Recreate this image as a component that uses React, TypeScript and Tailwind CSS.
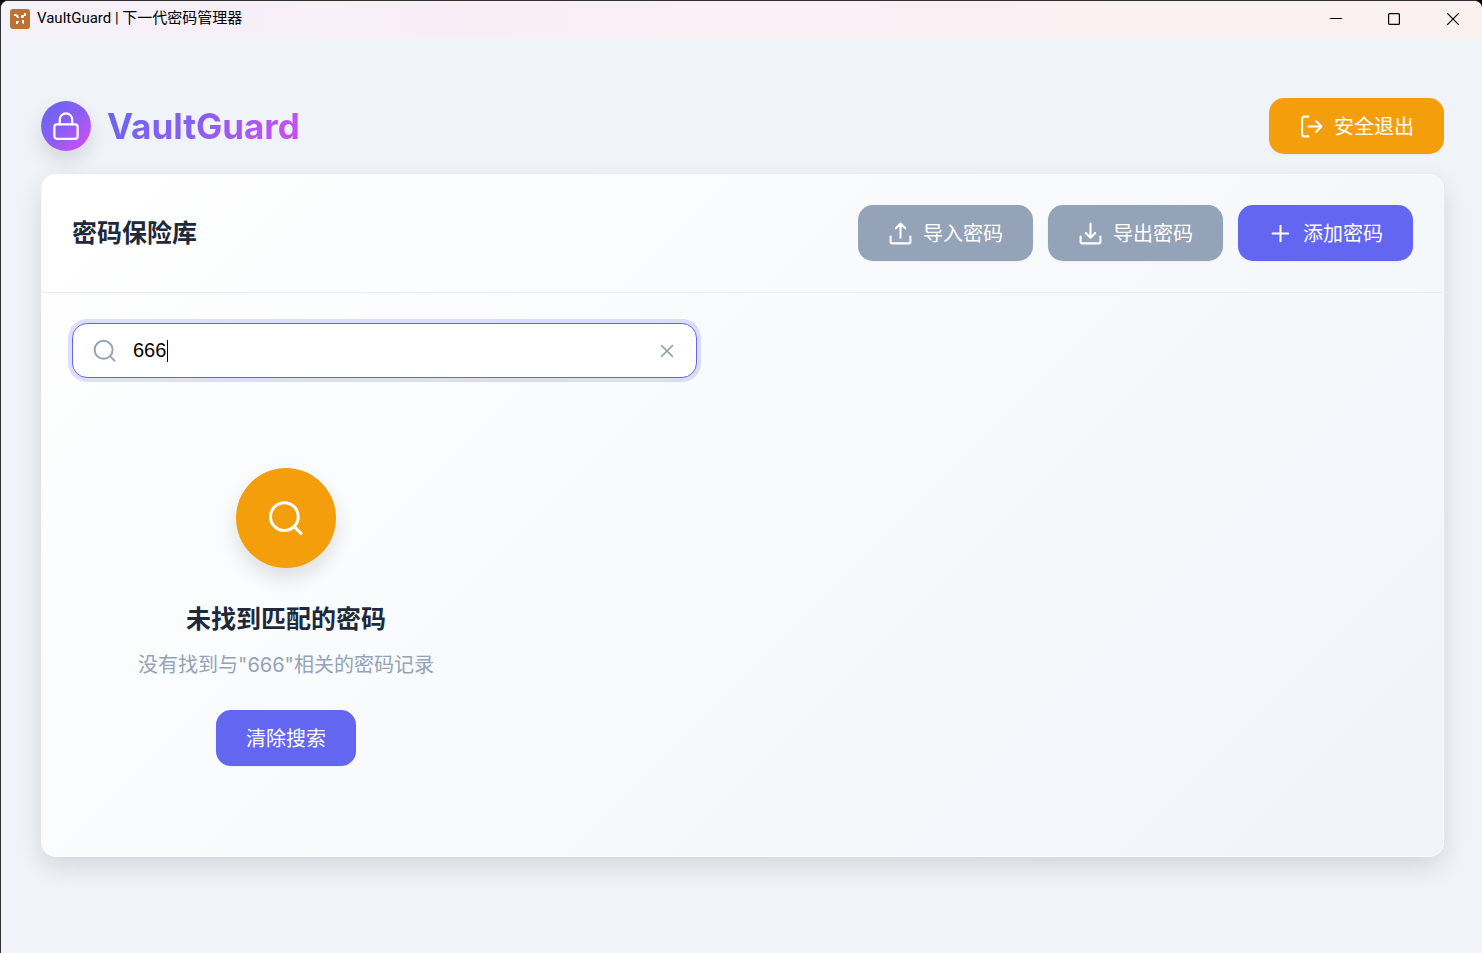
import { useState } from "react";
import type { ReactNode } from "react";

type IconProps = { children: ReactNode; className: string; width?: number };

function Icon({ children, className, width = 2 }: IconProps) {
  return (
    <svg viewBox="0 0 24 24" fill="none" stroke="currentColor" strokeWidth={width} strokeLinecap="round" strokeLinejoin="round" className={className} aria-hidden="true">
      {children}
    </svg>
  );
}

const searchShape = (
  <>
    <circle cx="10.6" cy="10.8" r="9" />
    <path d="m17.2 17.4 4.2 4.2" />
  </>
);

function ActionButton({ color, label, icon, onClick }: { color: string; label: string; icon?: ReactNode; onClick?: () => void }) {
  return (
    <button type="button" onClick={onClick} className={`flex h-14 items-center justify-center gap-2.5 rounded-[15px] px-[30px] text-xl font-normal text-white shadow-[0_1px_2px_rgba(0,0,0,0.05)] ${color}`}>
      {icon && <Icon className="size-[25px]">{icon}</Icon>}
      <span className="pt-0.5">{label}</span>
    </button>
  );
}

function TitleBar() {
  return (
    <header className="flex h-[37px] items-center justify-between bg-linear-to-r from-[#f5f1f9] via-[#f9eef7] via-30% to-[#faf1ef] pb-0.5">
      <div className="flex items-center gap-[7px] pl-[9px] font-[Roboto,'Noto_Sans_CJK_SC',sans-serif] text-[15px] text-black">
        <svg viewBox="0 0 20 20" className="size-5" aria-hidden="true">
          <rect width="20" height="20" rx="3" fill="#bb7333" />
          <path d="M4 5h2l1 1h1l1 3H7L6 7H4zM14 4h2v3h-2v1l-1 1h-2V7l1-1h2zM6 12h3l-1 2v1H6zM12 11h2v4h-1l-1-2z" fill="white" />
        </svg>
        <span>VaultGuard | 下一代密码管理器</span>
      </div>
      <div className="flex h-full text-black">
        <button type="button" aria-label="最小化" className="grid w-[58px] place-items-center">
          <svg viewBox="0 0 12 12" className="size-3"><path d="M0 5.5h12" stroke="currentColor" /></svg>
        </button>
        <button type="button" aria-label="最大化" className="grid w-[58px] place-items-center">
          <svg viewBox="0 0 12 12" className="size-3"><rect x=".6" y=".6" width="10.8" height="10.8" rx="1" fill="none" stroke="currentColor" strokeWidth="1.2" /></svg>
        </button>
        <button type="button" aria-label="关闭" className="grid w-[59px] place-items-center">
          <svg viewBox="0 0 12 12" className="size-3"><path d="m0 0 12 12M12 0 0 12" stroke="currentColor" strokeWidth="1.2" /></svg>
        </button>
      </div>
    </header>
  );
}

export default function App() {
  const [query, setQuery] = useState("666");
  return (
    <div className="min-h-screen bg-black font-[Inter,'Noto_Sans_CJK_SC',sans-serif]">
      <div className="flex min-h-screen flex-col overflow-hidden rounded-t-lg border-t border-l border-[#303030] bg-[#f0f4f9]">
        <TitleBar />
        <main className="pt-[60px] pr-[38px] pb-10 pl-10">
          <div className="flex items-center justify-between">
            <div className="flex items-center gap-4">
              <div className="grid size-[50px] place-items-center rounded-full bg-linear-135 from-[#6366f1] via-[#8b5cf6] to-[#d946ef] text-white shadow-[0_10px_20px_rgba(0,0,0,0.12)]">
                <Icon className="size-[30px]" width={1.8}>
                  <rect x="2.7" y="10.6" width="18.6" height="11.6" rx="2" />
                  <path d="M7 10.6V6.9a5 5 0 0 1 10 0v3.7" />
                </Icon>
              </div>
              <h1 className="bg-linear-135 from-[#6366f1] via-[#8b5cf6] to-[#d946ef] bg-clip-text text-[35px] leading-[54px] font-bold text-transparent">VaultGuard</h1>
            </div>
            <ActionButton color="bg-[#f59e0b]" label="安全退出" icon={<path d="M9 2.5H5a2 2 0 0 0-2 2v15a2 2 0 0 0 2 2h4M9 12h12.5M16.5 7l5 5-5 5" />} />
          </div>
          <section className="mt-5 min-h-[683px] rounded-[15px] border border-white/50 bg-linear-135 from-white to-[#f0f4f9] shadow-[0_10px_25px_rgba(0,0,0,0.12)]">
            <div className="flex items-center justify-between border-b border-[#e8edf1] px-[30px] pt-[30px] pb-[31px]">
              <h2 className="pt-0.5 text-[25px] font-bold text-[#1e293b]">密码保险库</h2>
              <div className="flex gap-[15px]">
                <ActionButton color="bg-[#94a3b8]" label="导入密码" icon={<path d="M2.5 15v5a1.5 1.5 0 0 0 1.5 1.5h16a1.5 1.5 0 0 0 1.5-1.5v-5M12 16V2.5M7.5 7 12 2.5 16.5 7" />} />
                <ActionButton color="bg-[#94a3b8]" label="导出密码" icon={<path d="M2.5 15v5a1.5 1.5 0 0 0 1.5 1.5h16a1.5 1.5 0 0 0 1.5-1.5v-5M12 2.5V16M7.5 11.5 12 16l4.5-4.5" />} />
                <ActionButton color="bg-[#6366f1]" label="添加密码" icon={<path d="M12 4.5v15M4.5 12h15" />} />
              </div>
            </div>
            <div className="p-[30px]">
              <div className="relative flex h-[55px] max-w-[625px] items-center rounded-[15px] border border-[#6366f1] bg-white pl-5 ring-4 ring-[#6366f1]/20">
                <Icon className="size-6 shrink-0 text-[#94a3b8]">{searchShape}</Icon>
                <input autoFocus aria-label="搜索密码" value={query} onChange={(e) => setQuery(e.target.value)} className="h-full min-w-0 flex-1 bg-transparent px-4 font-['Liberation_Sans','Noto_Sans_CJK_SC',sans-serif] text-xl text-black caret-transparent outline-none" />
                <span aria-hidden="true" className="pointer-events-none absolute left-[94px] h-[22px] w-px bg-black" />
                <button type="button" aria-label="清除" onClick={() => setQuery("")} className="grid h-full w-[58px] place-items-center text-[#94a3b8]">
                  <Icon className="size-5"><path d="m5.5 5.5 13 13M18.5 5.5l-13 13" /></Icon>
                </button>
              </div>
              <div className="mt-[90px] flex w-[428px] max-w-full flex-col items-center">
                <div className="grid size-[100px] place-items-center rounded-full bg-[#f59e0b] text-white shadow-[0_10px_20px_rgba(0,0,0,0.12)]">
                  <Icon className="size-[37px]">{searchShape}</Icon>
                </div>
                <h3 className="mt-8 text-[25px] leading-[38px] font-bold text-[#1e293b]">未找到匹配的密码</h3>
                <p className="mt-3 text-xl leading-[30px] text-[#94a3b8]">没有找到与"{query}"相关的密码记录</p>
                <div className="mt-[30px]">
                  <ActionButton color="bg-[#6366f1]" label="清除搜索" onClick={() => setQuery("")} />
                </div>
              </div>
            </div>
          </section>
        </main>
      </div>
    </div>
  );
}
